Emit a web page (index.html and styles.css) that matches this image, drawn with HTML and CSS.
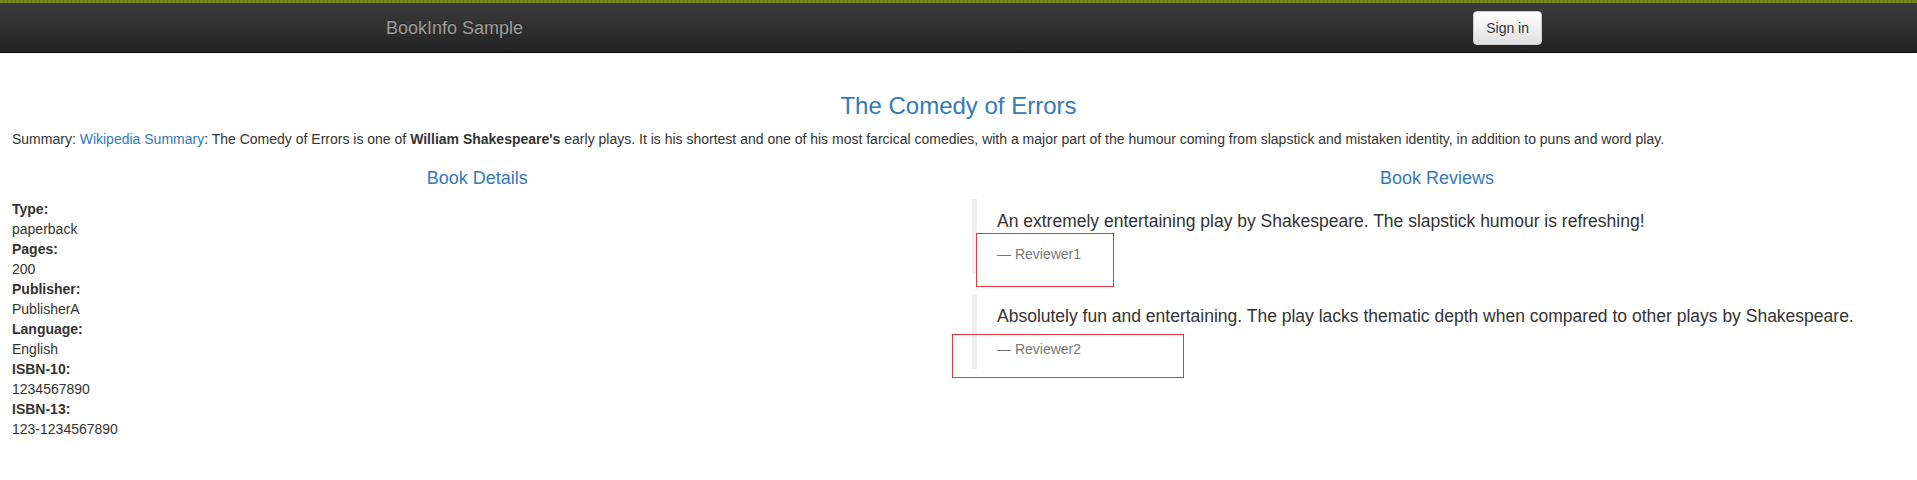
FILE: index.html
```html
<!DOCTYPE html>
<html lang="en">
<head>
<meta charset="utf-8">
<title>Simple Bookstore App</title>
<link rel="stylesheet" href="styles.css">
</head>
<body>
<div class="topstrip"></div>
<nav class="navbar">
  <div class="navbar-inner">
    <span class="brand">BookInfo Sample</span>
    <button class="btn-signin" type="button">Sign in</button>
  </div>
</nav>
<main class="page">
  <h3 class="title">The Comedy of Errors</h3>
  <p class="summary">Summary: <a class="link" href="#">Wikipedia Summary</a>: The Comedy of Errors is one of <b>William Shakespeare's</b> early plays. It is his shortest and one of his most farcical comedies, with a major part of the humour coming from slapstick and mistaken identity, in addition to puns and word play.</p>
  <div class="row">
    <section class="col col-details">
      <h4 class="col-title">Book Details</h4>
      <dl class="details">
        <dt>Type:</dt><dd>paperback</dd>
        <dt>Pages:</dt><dd>200</dd>
        <dt>Publisher:</dt><dd>PublisherA</dd>
        <dt>Language:</dt><dd>English</dd>
        <dt>ISBN-10:</dt><dd>1234567890</dd>
        <dt>ISBN-13:</dt><dd>123-1234567890</dd>
      </dl>
    </section>
    <section class="col col-reviews">
      <h4 class="col-title">Book Reviews</h4>
      <blockquote class="review">
        <p>An extremely entertaining play by Shakespeare. The slapstick humour is refreshing!</p>
        <small class="reviewer">Reviewer1</small>
      </blockquote>
      <blockquote class="review">
        <p>Absolutely fun and entertaining. The play lacks thematic depth when compared to other plays by Shakespeare.</p>
        <small class="reviewer">Reviewer2</small>
      </blockquote>
    </section>
  </div>
</main>
<div class="annot annot-1"></div>
<div class="annot annot-2"></div>
</body>
</html>
```
FILE: styles.css
```css
* { box-sizing: border-box; }
html, body { margin: 0; padding: 0; }
body {
  position: relative;
  font-family: "Liberation Sans", Arial, Helvetica, sans-serif;
  font-size: 14px;
  line-height: 20px;
  color: #333;
  background: #fff;
}
.topstrip {
  height: 3px;
  background: repeating-linear-gradient(90deg, #6a7a18 0, #7f8e22 2px, #5f6f16 4px);
}
.navbar {
  height: 50px;
  background: linear-gradient(to bottom, #3c3c3c 0, #222 100%);
  border-bottom: 1px solid #080808;
}
.navbar-inner {
  display: flex;
  justify-content: space-between;
  align-items: flex-start;
  padding-left: 386px;
  padding-right: 375px;
  height: 100%;
}
.brand {
  font-size: 18px;
  line-height: 20px;
  padding: 15px 0;
  color: #9d9d9d;
  text-shadow: 0 -1px 0 rgba(0,0,0,.25);
}
.btn-signin {
  margin-top: 8px;
  height: 34px;
  padding: 6px 12px;
  font-family: inherit;
  font-size: 14px;
  line-height: 20px;
  color: #333;
  background: linear-gradient(to bottom, #fff 0, #e0e0e0 100%);
  border: 1px solid #ccc;
  border-radius: 4px;
  text-shadow: 0 1px 0 #fff;
  box-shadow: inset 0 1px 0 rgba(255,255,255,.15), 0 1px 1px rgba(0,0,0,.075);
}
.page {
  padding-top: 40px;
}
.title {
  margin: 0 0 10px;
  padding: 0 12px;
  font-size: 24px;
  line-height: 1.1;
  font-weight: 500;
  text-align: center;
  color: #337ab7;
}
.summary {
  margin: 0 0 10px;
  padding: 0 12px;
}
.link { color: #337ab7; text-decoration: none; }
.row {
  display: grid;
  grid-template-columns: 1fr 1fr;
}
.col-details { padding: 0 16px 0 12px; }
.col-reviews { padding: 0 15px 0 13.5px; }
.col-title {
  margin: 10px 0;
  font-size: 18px;
  line-height: 1.1;
  font-weight: 500;
  text-align: center;
  color: #337ab7;
}
.details { margin: 0 0 20px; }
.details dt { font-weight: bold; }
.details dd { margin: 0; }
.review {
  margin: 0 0 20px;
  padding: 10px 20px;
  border-left: 5px solid #eee;
  font-size: 17.5px;
  line-height: 25px;
}
.review p { margin: 0 0 10px; }
.reviewer {
  display: block;
  font-size: 14px;
  line-height: 20px;
  color: #777;
}
.reviewer::before { content: "\2014 \00A0"; }
.annot {
  position: absolute;
  border: 1px solid #e8383b;
}
.annot-1 { left: 976px; top: 233px; width: 138px; height: 54px; }
.annot-2 { left: 952px; top: 334px; width: 232px; height: 44px; }
```
